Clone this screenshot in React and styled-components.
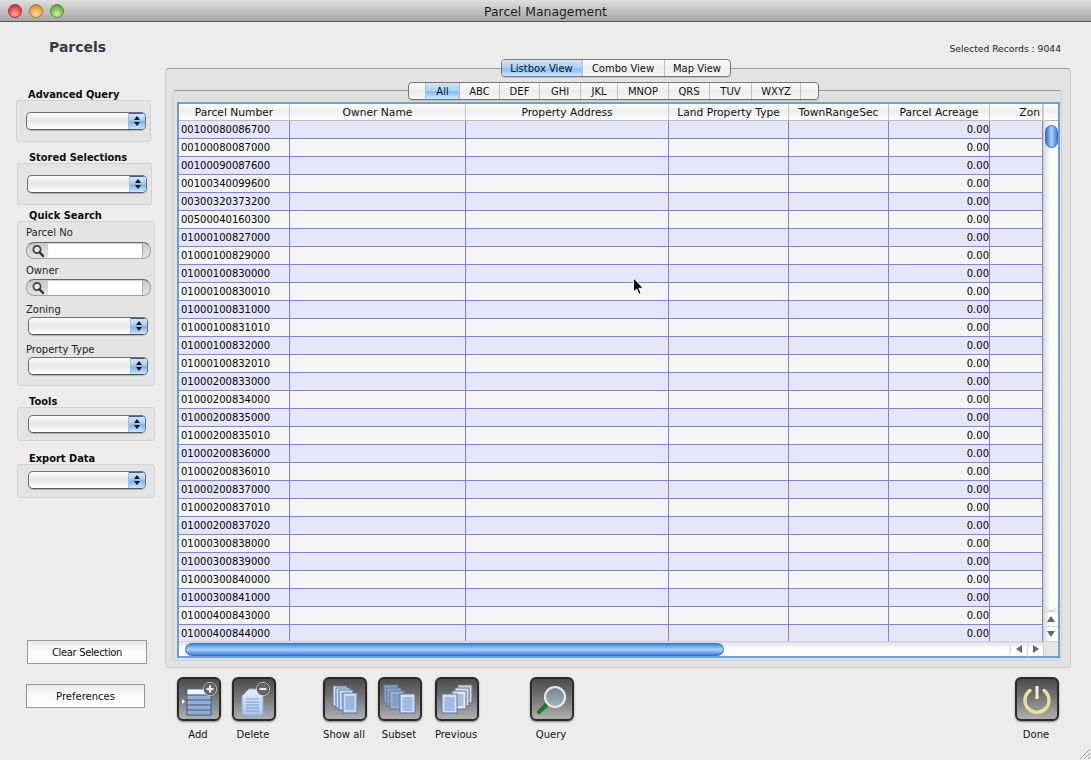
import styled, { createGlobalStyle } from "styled-components"

const GlobalStyle = createGlobalStyle`
  html, body {
    margin: 0;
    padding: 0;
    background: #ececec;
  }
  * {
    box-sizing: border-box;
  }
`

const Window = styled.div`
  position: relative;
  width: 1091px;
  height: 760px;
  overflow: hidden;
  background: #ececec;
  font-family: "DejaVu Sans", "Liberation Sans", sans-serif;
  font-size: 10px;
  color: #111;
  display: flex;
  flex-direction: column;
`

const TitleBar = styled.div`
  position: relative;
  height: 22px;
  flex: none;
  display: flex;
  align-items: center;
  justify-content: center;
  padding-top: 1px;
  background: linear-gradient(#e0e0e0, #c4c4c4 45%, #a6a6a6);
  border-bottom: 1px solid #555;
  font-size: 12.4px;
  color: #1c1c1c;
`

const Lights = styled.div`
  position: absolute;
  left: 8px;
  top: 4px;
  display: flex;
  gap: 7px;
`

const Light = styled.span`
  width: 14px;
  height: 14px;
  border-radius: 50%;
  border: 1px solid ${(p) => p.$edge};
  background: radial-gradient(circle at 50% 75%, ${(p) => p.$glow}, ${(p) => p.$color} 60%, ${(p) => p.$edge});
`

const Content = styled.div`
  flex: 1;
  display: flex;
  min-height: 0;
`

const Sidebar = styled.aside`
  width: 165px;
  flex: none;
  display: flex;
  flex-direction: column;
`

const SideTitle = styled.h1`
  margin: 17px 0 0 49px;
  height: 16px;
  font-size: 14px;
  line-height: 16px;
  font-weight: bold;
  color: #3a3a44;
`

const GroupLabel = styled.div`
  margin: ${(p) => p.$top}px 0 0 ${(p) => p.$left}px;
  height: 12px;
  line-height: 14px;
  font-size: 9.9px;
  font-weight: bold;
  color: #0c0c0c;
  white-space: nowrap;
`

const Group = styled.div`
  margin-left: ${(p) => p.$left}px;
  width: ${(p) => p.$width}px;
  height: ${(p) => p.$height}px;
  padding-top: ${(p) => p.$pad}px;
  background: #e4e4e4;
  border: 1px solid #d2d2d2;
  border-radius: 3px;
  display: flex;
  flex-direction: column;
`

const FieldLabel = styled.div`
  height: 12px;
  line-height: 12px;
  margin: ${(p) => p.$top || 0}px 0 0 8px;
  font-size: 10px;
  color: #222;
`

const SelectBox = styled.div`
  width: ${(p) => p.$width}px;
  height: 18px;
  margin-left: ${(p) => p.$left}px;
  margin-top: ${(p) => p.$top || 0}px;
  flex: none;
  display: flex;
  justify-content: flex-end;
  border: 1px solid #6f6f6f;
  border-bottom-color: #555;
  border-radius: 5px;
  overflow: hidden;
  background: linear-gradient(#fdfdfd, #e6e6e6 45%, #ececec 60%, #ffffff);
  box-shadow: 0 1px 1px rgba(0, 0, 0, 0.22);
`

const SelectArrows = styled.div`
  width: 17px;
  display: flex;
  flex-direction: column;
  align-items: center;
  justify-content: center;
  gap: 2px;
  background: linear-gradient(#dbeafc, #a8cdf6 45%, #78b4f2 55%, #cfe6fd);
  border-left: 1px solid #a9bdd6;
  box-shadow: inset 0 1px 0 #3a5aa8;
`

const ArrowUp = styled.i`
  width: 0;
  height: 0;
  border-left: 3px solid transparent;
  border-right: 3px solid transparent;
  border-bottom: 4px solid #111;
`

const ArrowDown = styled.i`
  width: 0;
  height: 0;
  border-left: 3px solid transparent;
  border-right: 3px solid transparent;
  border-top: 4px solid #111;
`

const SearchBox = styled.div`
  width: 125px;
  height: 17px;
  margin: ${(p) => p.$top || 0}px 0 0 8px;
  flex: none;
  display: flex;
  border: 1px solid #a0a0a0;
  border-top-color: #666;
  border-radius: 8px;
  overflow: hidden;
  background: linear-gradient(#c8c8c8, #e6e6e6);
`

const SearchIcon = styled.div`
  width: 21px;
  flex: none;
  display: flex;
  align-items: center;
  justify-content: center;
`

const SearchInput = styled.div`
  flex: 1;
  background: #fff;
  box-shadow: inset 0 1px 1px rgba(0, 0, 0, 0.2);
`

const SearchCap = styled.div`
  width: 8px;
  flex: none;
  border-left: 1px solid #aaa;
`

const PlainButton = styled.button`
  display: block;
  width: ${(p) => p.$width}px;
  height: 24px;
  margin: ${(p) => p.$top}px 0 0 ${(p) => p.$left}px;
  padding: 0;
  flex: none;
  border: 1px solid #979797;
  background: linear-gradient(#e8e8e8, #fafafa 40%, #fdfdfd);
  font-family: inherit;
  font-size: 10px;
  letter-spacing: ${(p) => (p.$tight ? "-0.35px" : "0")};
  color: #111;
`

const Main = styled.main`
  flex: 1;
  display: flex;
  flex-direction: column;
  min-width: 0;
`

const RecordCount = styled.div`
  height: 46px;
  width: 896px;
  padding-top: 21px;
  line-height: 12px;
  text-align: right;
  font-size: 9.2px;
  color: #222;
`

const OuterPanel = styled.section`
  width: 906px;
  height: 600px;
  padding: 0 8px 6px 6px;
  flex: none;
  display: flex;
  flex-direction: column;
  background: #e3e3e3;
  border: 1px solid #cdcdcd;
  border-top-color: #9c9c9c;
  border-radius: 4px;
`

const TabRow = styled.div`
  display: flex;
  justify-content: center;
  margin-top: ${(p) => p.$top}px;
  margin-left: ${(p) => p.$shift || 0}px;
  position: relative;
  flex: none;
`

const Segmented = styled.div`
  height: 18px;
  display: flex;
  background: linear-gradient(#fcfcfc, #ededed 50%, #f6f6f6);
  border: 1px solid #777;
  border-radius: 4px;
  overflow: hidden;
  box-shadow: 0 1px 1px rgba(0, 0, 0, 0.15);
`

const Segment = styled.div`
  width: ${(p) => p.$width}px;
  height: 100%;
  display: flex;
  align-items: center;
  justify-content: center;
  font-size: 10px;
  color: #111;
  white-space: nowrap;
  border-left: ${(p) => (p.$first ? "none" : "1px solid #bcbcbc")};
  background: ${(p) => (p.$active ? "linear-gradient(#cfe4fa, #a9d0f8 50%, #7cbcf6 55%, #d2eafd)" : "transparent")};
`

const InnerPanel = styled.div`
  flex: 1;
  margin-top: 13px;
  padding: 0 1px 2px 4px;
  display: flex;
  flex-direction: column;
  min-height: 0;
  background: #e0e0e0;
  border: 1px solid #d2d2d2;
  border-top-color: #999;
  border-radius: 4px;
`

const TableFrame = styled.div`
  flex: 1;
  margin-top: 2px;
  border: 2px solid #6b9fd8;
  display: grid;
  grid-template-columns: 1fr 15px;
  grid-template-rows: 1fr 15px;
  min-height: 0;
  background: #fff;
`

const TableArea = styled.div`
  overflow: hidden;
  min-width: 0;
  min-height: 0;
`

const HeaderRow = styled.div`
  display: grid;
  grid-template-columns: 111px 176px 203px 120px 100px 101px 53px;
  height: 17px;
  background: linear-gradient(#ffffff, #ededed 40%, #f2f2f2 60%, #ffffff);
  border-bottom: 1px solid #bbb;
`

const HeaderCell = styled.div`
  text-align: ${(p) => p.$align || "center"};
  line-height: 17px;
  font-size: 10.7px;
  color: #111;
  white-space: nowrap;
  overflow: hidden;
  border-right: 1px solid #c4c4c4;
  padding-right: ${(p) => (p.$align ? 2 : 0)}px;
`

const Row = styled.div`
  display: grid;
  grid-template-columns: 111px 176px 203px 120px 100px 101px 53px;
  height: 18px;
  background: ${(p) => (p.$odd ? "#e5e5fb" : "#f5f5f5")};
  border-bottom: 1px solid #8480d2;
`

const Cell = styled.div`
  line-height: 17px;
  font-size: 10px;
  color: #000;
  padding: 0 ${(p) => (p.$right ? 0 : 2)}px;
  text-align: ${(p) => (p.$right ? "right" : "left")};
  border-right: 1px solid #8480d2;
  white-space: nowrap;
  overflow: hidden;
`

const VScroll = styled.div`
  display: flex;
  flex-direction: column;
  align-items: center;
  background: linear-gradient(90deg, #dedede, #fafafa 40%, #fff);
  border-left: 1px solid #cfcfcf;
`

const ScrollCap = styled.div`
  width: 100%;
  height: 17px;
  flex: none;
  background: linear-gradient(#fff, #ededed 40%, #f6f6f6 70%, #fff);
  border-bottom: 1px solid #bbb;
`

const VThumb = styled.div`
  width: 13px;
  height: 23px;
  margin-top: 4px;
  flex: none;
  border-radius: 7px;
  border: 1px solid #3f6fb8;
  background: linear-gradient(90deg, #2e6fd0, #a8d2fa 50%, #3b82e0);
`

const VTrackEnd = styled.div`
  flex: 1;
  width: 100%;
  border-bottom: 1px solid #ccc;
  border-radius: 0 0 7px 7px;
`

const ScrollArrow = styled.div`
  width: 100%;
  height: 15px;
  flex: none;
  display: flex;
  align-items: center;
  justify-content: center;
  border-top: ${(p) => (p.$line ? "1px solid #d6d6d6" : "none")};
  border-left: ${(p) => (p.$left ? "1px solid #d6d6d6" : "none")};
  color: #555;
`

const ArrowGlyph = styled.i`
  width: 0;
  height: 0;
  ${(p) => p.$dir === "up" && "border-left: 4px solid transparent; border-right: 4px solid transparent; border-bottom: 6px solid #666;"}
  ${(p) => p.$dir === "down" && "border-left: 4px solid transparent; border-right: 4px solid transparent; border-top: 6px solid #666;"}
  ${(p) => p.$dir === "left" && "border-top: 4px solid transparent; border-bottom: 4px solid transparent; border-right: 6px solid #666;"}
  ${(p) => p.$dir === "right" && "border-top: 4px solid transparent; border-bottom: 4px solid transparent; border-left: 6px solid #666;"}
`

const HScroll = styled.div`
  display: flex;
  align-items: center;
  background: linear-gradient(#dedede, #fafafa 40%, #fff);
  border-top: 1px solid #cfcfcf;
`

const HTrack = styled.div`
  flex: 1;
  height: 100%;
  padding-left: 6px;
  display: flex;
  align-items: center;
  border-right: 1px solid #ccc;
  border-radius: 0 7px 7px 0;
`

const HThumb = styled.div`
  width: 539px;
  height: 13px;
  border-radius: 7px;
  border: 1px solid #3f6fb8;
  background: linear-gradient(#3f86e2, #a9d3fa 50%, #3b82e0);
`

const HArrow = styled(ScrollArrow)`
  width: 16px;
`

const Corner = styled.div`
  background: #e6e6e6;
  border-top: 1px solid #cfcfcf;
  border-left: 1px solid #cfcfcf;
`

const Toolbar = styled.div`
  display: flex;
  margin-top: 9px;
  flex: none;
`

const ToolItem = styled.div`
  width: 44px;
  margin-left: ${(p) => p.$gap}px;
  flex: none;
  display: flex;
  flex-direction: column;
  align-items: center;
`

const ToolButton = styled.div`
  width: 44px;
  height: 44px;
  flex: none;
  border-radius: 6px;
  border: 2px solid #2a2a2a;
  background: linear-gradient(#4c4c4c, #6a6a6a 35%, #959595 75%, #b0b0b0);
  box-shadow: 0 1px 2px rgba(0, 0, 0, 0.45);
  display: flex;
  align-items: center;
  justify-content: center;
  overflow: hidden;
`

const ToolLabel = styled.div`
  margin: 8px 2px 0 0;
  font-size: 10px;
  line-height: 12px;
  color: #111;
  white-space: nowrap;
`

const CursorMark = styled.svg`
  position: absolute;
  left: 632px;
  top: 277px;
`

const ResizeGrip = styled.svg`
  position: absolute;
  right: 0;
  bottom: 0;
`

const PARCELS = [
  "00100080086700", "00100080087000", "00100090087600", "00100340099600", "00300320373200",
  "00500040160300", "01000100827000", "01000100829000", "01000100830000", "01000100830010",
  "01000100831000", "01000100831010", "01000100832000", "01000100832010", "01000200833000",
  "01000200834000", "01000200835000", "01000200835010", "01000200836000", "01000200836010",
  "01000200837000", "01000200837010", "01000200837020", "01000300838000", "01000300839000",
  "01000300840000", "01000300841000", "01000400843000", "01000400844000",
]

const ALPHA = [
  ["", 16], ["All", 34], ["ABC", 40], ["DEF", 40], ["GHI", 41], ["JKL", 37],
  ["MNOP", 51], ["QRS", 41], ["TUV", 42], ["WXYZ", 49], ["", 18],
]

function Select({ width = 120, left = 10, top }) {
  return (
    <SelectBox $width={width} $left={left} $top={top}>
      <SelectArrows>
        <ArrowUp />
        <ArrowDown />
      </SelectArrows>
    </SelectBox>
  )
}

function Search({ top }) {
  return (
    <SearchBox $top={top}>
      <SearchIcon>
        <svg width="14" height="14" viewBox="0 0 14 14">
          <circle cx="6" cy="5.5" r="3.6" fill="#e6e6e6" stroke="#444" strokeWidth="1.8" />
          <path d="M8.6 8.2L12 12" stroke="#333" strokeWidth="2.4" strokeLinecap="round" />
        </svg>
      </SearchIcon>
      <SearchInput />
      <SearchCap />
    </SearchBox>
  )
}

function Page({ x, y, w = 14, h = 20, fill = "#a9c6ea" }) {
  const lines = []
  for (let ly = y + 4; ly < y + h - 2; ly += 2) {
    lines.push(<path key={ly} d={`M${x + 2.5} ${ly}H${x + w - 2.5}`} stroke="#5f80b4" strokeWidth="0.8" />)
  }
  return (
    <g>
      <rect x={x} y={y} width={w} height={h} fill={fill} stroke="#5d78a8" strokeWidth="1" />
      {lines}
    </g>
  )
}

function Badge({ cx, minus }) {
  return (
    <g>
      <circle cx={cx} cy="10" r="6" fill="#6a6a6a" stroke="#333" strokeWidth="0.8" />
      <circle cx={cx} cy="10" r="6.6" fill="none" stroke="#ddd" strokeWidth="0.8" />
      <path d={`M${cx - 3.5} 10H${cx + 3.5}`} stroke="#eee" strokeWidth="2" />
      {!minus && <path d={`M${cx} 6.5V13.5`} stroke="#eee" strokeWidth="2" />}
    </g>
  )
}

function ToolIcon({ name }) {
  if (name === "add") {
    return (
      <svg width="40" height="40" viewBox="0 0 40 40">
        <path d="M3 20l3 2.5-3 2.5z" fill="#fff" />
        <rect x="8" y="10" width="24" height="26" fill="#93aece" stroke="#3f5c8c" />
        <rect x="8.5" y="10.5" width="23" height="5" fill="#f6f9ff" />
        <path d="M8 16h24M8 21h24M8 26h24M8 31h24" stroke="#3f5c8c" />
        <Badge cx={31} />
      </svg>
    )
  }
  if (name === "delete") {
    return (
      <svg width="40" height="40" viewBox="0 0 40 40">
        <defs>
          <linearGradient id="sheet" x1="0" y1="0" x2="0" y2="1">
            <stop offset="0" stopColor="#e4eefb" />
            <stop offset="1" stopColor="#a8c8ee" />
          </linearGradient>
        </defs>
        <path d="M8 17l7-7h14v26H8z" fill="url(#sheet)" stroke="#8ea9cf" />
        <path d="M12 20h13M12 23h13M12 26h13M12 29h13M12 32h13" stroke="#7a9ac8" />
        <Badge cx={29} minus />
      </svg>
    )
  }
  if (name === "showall") {
    return (
      <svg width="40" height="40" viewBox="0 0 40 40">
        <Page x={8} y={7} fill="#d4e0f2" />
        <Page x={11} y={9} fill="#d0dff2" />
        <Page x={14} y={11} fill="#cadcf2" />
        <Page x={18} y={14} fill="#c4dbf6" />
      </svg>
    )
  }
  if (name === "subset") {
    return (
      <svg width="40" height="40" viewBox="0 0 40 40">
        <Page x={4} y={6} h={18} fill="#8a9fc0" />
        <Page x={7} y={9} h={18} fill="#92a8c8" />
        <Page x={10} y={12} h={18} fill="#9ab0d0" />
        <Page x={20} y={15} w={15} h={19} fill="#cfe2f8" />
      </svg>
    )
  }
  if (name === "previous") {
    return (
      <svg width="40" height="40" viewBox="0 0 40 40">
        <Page x={21} y={6} h={18} fill="#d8d8d8" />
        <Page x={18} y={9} h={18} fill="#e0e0e0" />
        <Page x={15} y={12} h={18} fill="#e8e8e8" />
        <Page x={5} y={15} w={15} h={19} fill="#cfe2f8" />
      </svg>
    )
  }
  if (name === "query") {
    return (
      <svg width="40" height="40" viewBox="0 0 40 40">
        <defs>
          <linearGradient id="lens" x1="0" y1="0" x2="0" y2="1">
            <stop offset="0" stopColor="#6f8494" />
            <stop offset="1" stopColor="#a2b4c0" />
          </linearGradient>
        </defs>
        <path d="M14 26L7 33" stroke="#1f7a25" strokeWidth="4.5" strokeLinecap="round" />
        <circle cx="23" cy="18" r="10" fill="url(#lens)" stroke="#e8e8e8" strokeWidth="2.2" />
      </svg>
    )
  }
  return (
    <svg width="40" height="40" viewBox="0 0 40 40">
      <path d="M13 11.5a12 12 0 1 0 14 0" fill="none" stroke="#ecdf9c" strokeWidth="3.4" strokeLinecap="round" />
      <path d="M20 7V20" stroke="#f6efc6" strokeWidth="3" />
    </svg>
  )
}

function Tool({ gap, name, label }) {
  return (
    <ToolItem $gap={gap}>
      <ToolButton>
        <ToolIcon name={name} />
      </ToolButton>
      <ToolLabel>{label}</ToolLabel>
    </ToolItem>
  )
}

export default function App() {
  return (
    <Window>
      <GlobalStyle />
      <TitleBar>
        <Lights>
          <Light $color="#e8444a" $glow="#ffb0a8" $edge="#a83038" />
          <Light $color="#eda53c" $glow="#ffe2a0" $edge="#b0782c" />
          <Light $color="#78b848" $glow="#cdf0a8" $edge="#558a38" />
        </Lights>
        Parcel Management
      </TitleBar>

      <Content>
        <Sidebar>
          <SideTitle>Parcels</SideTitle>

          <GroupLabel $top={33} $left={28}>Advanced Query</GroupLabel>
          <Group $left={16} $width={135} $height={42} $pad={11}>
            <Select top={0} left={9} />
          </Group>

          <GroupLabel $top={9} $left={29}>Stored Selections</GroupLabel>
          <Group $left={17} $width={135} $height={42} $pad={11}>
            <Select left={9} />
          </Group>

          <GroupLabel $top={4} $left={29}>Quick Search</GroupLabel>
          <Group $left={17} $width={138} $height={165} $pad={5}>
            <FieldLabel>Parcel No</FieldLabel>
            <Search top={3} />
            <FieldLabel $top={6}>Owner</FieldLabel>
            <Search top={2} />
            <FieldLabel $top={8}>Zoning</FieldLabel>
            <Select left={10} top={1} />
            <FieldLabel $top={9}>Property Type</FieldLabel>
            <Select left={10} top={1} />
          </Group>

          <GroupLabel $top={9} $left={29}>Tools</GroupLabel>
          <Group $left={17} $width={138} $height={34} $pad={7}>
            <Select width={118} left={10} />
          </Group>

          <GroupLabel $top={11} $left={29}>Export Data</GroupLabel>
          <Group $left={17} $width={138} $height={34} $pad={6}>
            <Select width={118} left={10} />
          </Group>

          <PlainButton $width={120} $left={27} $top={142} $tight>Clear Selection</PlainButton>
          <PlainButton $width={119} $left={26} $top={20}>Preferences</PlainButton>
        </Sidebar>

        <Main>
          <RecordCount>Selected Records : 9044</RecordCount>
          <OuterPanel>
            <TabRow $top={-10} $shift={-3}>
              <Segmented>
                <Segment $width={80} $first $active>Listbox View</Segment>
                <Segment $width={82}>Combo View</Segment>
                <Segment $width={66}>Map View</Segment>
              </Segmented>
            </TabRow>
            <InnerPanel>
              <TabRow $top={-9} $shift={-10}>
                <Segmented>
                  {ALPHA.map(([text, width], i) => (
                    <Segment key={i} $width={width} $first={i === 0} $active={text === "All"}>
                      {text}
                    </Segment>
                  ))}
                </Segmented>
              </TabRow>
              <TableFrame>
                <TableArea>
                  <HeaderRow>
                    <HeaderCell>Parcel Number</HeaderCell>
                    <HeaderCell>Owner Name</HeaderCell>
                    <HeaderCell>Property Address</HeaderCell>
                    <HeaderCell>Land Property Type</HeaderCell>
                    <HeaderCell>TownRangeSec</HeaderCell>
                    <HeaderCell>Parcel Acreage</HeaderCell>
                    <HeaderCell $align="right">Zon</HeaderCell>
                  </HeaderRow>
                  {PARCELS.map((parcel, i) => (
                    <Row key={parcel} $odd={i % 2 === 0}>
                      <Cell>{parcel}</Cell>
                      <Cell />
                      <Cell />
                      <Cell />
                      <Cell />
                      <Cell $right>0.00</Cell>
                      <Cell />
                    </Row>
                  ))}
                </TableArea>
                <VScroll>
                  <ScrollCap />
                  <VThumb />
                  <VTrackEnd />
                  <ScrollArrow $line>
                    <ArrowGlyph $dir="up" />
                  </ScrollArrow>
                  <ScrollArrow $line>
                    <ArrowGlyph $dir="down" />
                  </ScrollArrow>
                </VScroll>
                <HScroll>
                  <HTrack>
                    <HThumb />
                  </HTrack>
                  <HArrow>
                    <ArrowGlyph $dir="left" />
                  </HArrow>
                  <HArrow $left>
                    <ArrowGlyph $dir="right" />
                  </HArrow>
                </HScroll>
                <Corner />
              </TableFrame>
            </InnerPanel>
          </OuterPanel>

          <Toolbar>
            <Tool gap={12} name="add" label="Add" />
            <Tool gap={11} name="delete" label="Delete" />
            <Tool gap={47} name="showall" label="Show all" />
            <Tool gap={11} name="subset" label="Subset" />
            <Tool gap={13} name="previous" label="Previous" />
            <Tool gap={51} name="query" label="Query" />
            <Tool gap={441} name="done" label="Done" />
          </Toolbar>
        </Main>
      </Content>

      <CursorMark width="14" height="20" viewBox="0 0 14 20">
        <path d="M1.5 1v14l3.2-3 2.2 5.4 2.2-1-2.2-5.2h4.4z" fill="#000" stroke="#fff" strokeWidth="1" />
      </CursorMark>
      <ResizeGrip width="14" height="14" viewBox="0 0 14 14">
        <path d="M3 13L13 3M7 13l6-6M11 13l2-2" stroke="#9a9a9a" strokeWidth="1" />
      </ResizeGrip>
    </Window>
  )
}
